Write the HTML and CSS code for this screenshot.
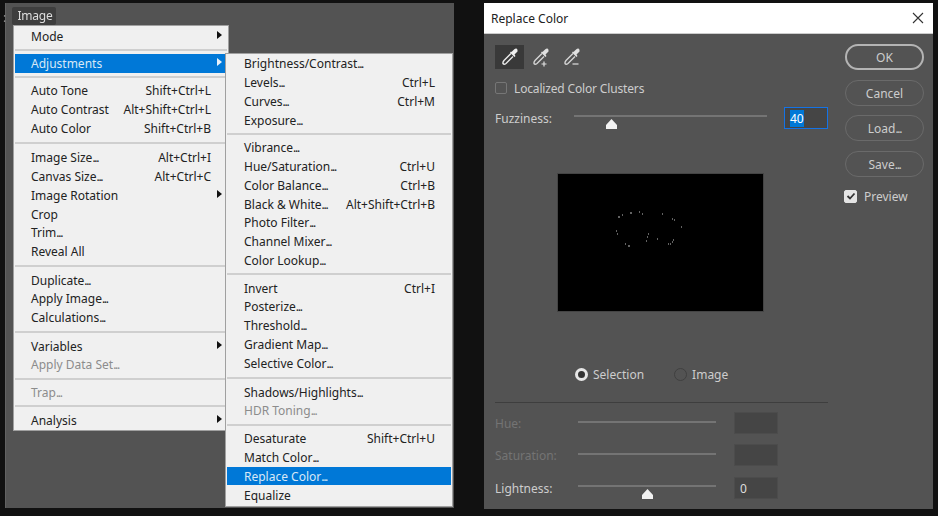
FILE: index.html
```html
<!DOCTYPE html>
<html>
  <head>
    <title>Replace Color</title>
    <meta charset="UTF-8">
    <link rel="stylesheet" href="styles.css">
  </head>
  <body>
    <div class="screen">
      <div class="workspace">
        <span class="grip">:</span>
        <div class="menu-title">Image</div>
        <div class="menu menu-main">
          <div class="item sub">Mode</div>
          <div class="sep"></div>
          <div class="item sub active">Adjustments</div>
          <div class="sep"></div>
          <div class="item">Auto Tone<span>Shift+Ctrl+L</span></div>
          <div class="item">Auto Contrast<span>Alt+Shift+Ctrl+L</span></div>
          <div class="item">Auto Color<span>Shift+Ctrl+B</span></div>
          <div class="sep wide"></div>
          <div class="item"><div>Image Size<i>...</i></div><span>Alt+Ctrl+I</span></div>
          <div class="item"><div>Canvas Size<i>...</i></div><span>Alt+Ctrl+C</span></div>
          <div class="item sub">Image Rotation</div>
          <div class="item">Crop</div>
          <div class="item"><div>Trim<i>...</i></div></div>
          <div class="item">Reveal All</div>
          <div class="sep mid"></div>
          <div class="item"><div>Duplicate<i>...</i></div></div>
          <div class="item"><div>Apply Image<i>...</i></div></div>
          <div class="item"><div>Calculations<i>...</i></div></div>
          <div class="sep mid"></div>
          <div class="item sub">Variables</div>
          <div class="item off"><div>Apply Data Set<i>...</i></div></div>
          <div class="sep"></div>
          <div class="item off"><div>Trap<i>...</i></div></div>
          <div class="sep mid"></div>
          <div class="item sub">Analysis</div>
        </div>
        <div class="menu menu-adjust">
          <div class="item"><div>Brightness/Contrast<i>...</i></div></div>
          <div class="item"><div>Levels<i>...</i></div><span>Ctrl+L</span></div>
          <div class="item"><div>Curves<i>...</i></div><span>Ctrl+M</span></div>
          <div class="item"><div>Exposure<i>...</i></div></div>
          <div class="sep"></div>
          <div class="item"><div>Vibrance<i>...</i></div></div>
          <div class="item"><div>Hue/Saturation<i>...</i></div><span>Ctrl+U</span></div>
          <div class="item"><div>Color Balance<i>...</i></div><span>Ctrl+B</span></div>
          <div class="item"><div>Black &amp; White<i>...</i></div><span>Alt+Shift+Ctrl+B</span></div>
          <div class="item"><div>Photo Filter<i>...</i></div></div>
          <div class="item"><div>Channel Mixer<i>...</i></div></div>
          <div class="item"><div>Color Lookup<i>...</i></div></div>
          <div class="sep"></div>
          <div class="item">Invert<span>Ctrl+I</span></div>
          <div class="item"><div>Posterize<i>...</i></div></div>
          <div class="item"><div>Threshold<i>...</i></div></div>
          <div class="item"><div>Gradient Map<i>...</i></div></div>
          <div class="item"><div>Selective Color<i>...</i></div></div>
          <div class="sep mid"></div>
          <div class="item"><div>Shadows/Highlights<i>...</i></div></div>
          <div class="item off"><div>HDR Toning<i>...</i></div></div>
          <div class="sep"></div>
          <div class="item">Desaturate<span>Shift+Ctrl+U</span></div>
          <div class="item"><div>Match Color<i>...</i></div></div>
          <div class="item active"><div>Replace Color<i>...</i></div></div>
          <div class="item last">Equalize</div>
        </div>
      </div>

      <div class="dialog">
        <div class="titlebar">
          <span>Replace Color</span>
          <svg class="close" width="12" height="12" viewBox="0 0 12 12"><path d="M1 1l10 10M11 1L1 11" stroke="#333" stroke-width="1.1" fill="none"/></svg>
        </div>
        <div class="dialog-body">
          <div class="controls">
            <div class="tools">
              <div class="tool selected">
                <svg width="20" height="20" viewBox="0 0 20 20"><path d="M11 6.500L4 13.500Q2.500 15.500 3 16.500Q4 18 6 16.500L13 9.500" fill="none" stroke="#e8e8e8" stroke-width="1.400"/><path d="M10 5.500L14.500 10L15.500 9L14.500 7.500L17.500 4.500Q18 2.500 16.500 1.500Q15 1 13.500 3L11.500 5L11 4.500Z" fill="#f0f0f0"/></svg>
              </div>
              <div class="tool">
                <svg width="20" height="20" viewBox="0 0 20 20"><path d="M11 6.500L4 13.500Q2.500 15.500 3 16.500Q4 18 6 16.500L13 9.500" fill="none" stroke="#d4d4d4" stroke-width="1.400"/><path d="M10 5.500L14.500 10L15.500 9L14.500 7.500L17.500 4.500Q18 2.500 16.500 1.500Q15 1 13.500 3L11.500 5L11 4.500Z" fill="#e0e0e0"/><path d="M10.500 17h5M13 14.500v5" stroke="#e0e0e0" stroke-width="1.200" fill="none"/></svg>
              </div>
              <div class="tool">
                <svg width="20" height="20" viewBox="0 0 20 20"><path d="M11 6.500L4 13.500Q2.500 15.500 3 16.500Q4 18 6 16.500L13 9.500" fill="none" stroke="#d4d4d4" stroke-width="1.400"/><path d="M10 5.500L14.500 10L15.500 9L14.500 7.500L17.500 4.500Q18 2.500 16.500 1.500Q15 1 13.500 3L11.500 5L11 4.500Z" fill="#e0e0e0"/><path d="M10.500 17h6" stroke="#e0e0e0" stroke-width="1.200" fill="none"/></svg>
              </div>
            </div>
            <label class="check-row"><span class="box"></span>Localized Color Clusters</label>
            <div class="slider-row fuzz">
              <span class="slider-label">Fuzziness:</span>
              <div class="track"><i class="thumb thumb-fuzz"></i></div>
              <div class="num focused"><b>40</b></div>
            </div>
            <div class="preview">
              <svg width="206" height="137" viewBox="0 0 206 137">
                <path d="M60 43h2M64 41h1M72 39h2M81 38h1M84 40h1M104 40h1M114 45h1M116 46h1M123 53h1M58 57h1M59 60h1M67 70h1M70 72h2M115 66h1M114 68h1M112 70h1M110 70h1M90 60h1M89 63h1M88 67h1M99 65h1"
                  stroke="#c4c4c4" stroke-width="1" fill="none"/>
              </svg>
            </div>
            <div class="radios">
              <label class="radio-row"><span class="radio on"></span>Selection</label>
              <label class="radio-row"><span class="radio"></span>Image</label>
            </div>
            <div class="rule"></div>
            <div class="slider-row off">
              <span class="slider-label">Hue:</span>
              <div class="track"></div>
              <div class="num"></div>
            </div>
            <div class="slider-row off">
              <span class="slider-label">Saturation:</span>
              <div class="track"></div>
              <div class="num"></div>
            </div>
            <div class="slider-row light">
              <span class="slider-label">Lightness:</span>
              <div class="track"><i class="thumb thumb-light"></i></div>
              <div class="num">0</div>
            </div>
          </div>
          <div class="buttons">
            <button class="default">OK</button>
            <button>Cancel</button>
            <button>Load<i>...</i></button>
            <button>Save<i>...</i></button>
            <label class="preview-check">
              <span class="box checked"><svg width="10" height="10" viewBox="0 0 10 10"><path d="M1.500 5l2.500 2.500 4.500-5" fill="none" stroke="#333" stroke-width="1.800"/></svg></span>Preview
            </label>
          </div>
        </div>
      </div>
    </div>
  </body>
</html>
```

FILE: styles.css
```css
* {
  box-sizing: border-box;
}
html, body {
  margin: 0;
  padding: 0;
  background-color: #111;
}
body {
  font-family: "Noto Sans", sans-serif;
  font-size: 12px;
  overflow: hidden;
}
i {
  font-style: normal;
}
.screen {
  display: flex;
  align-items: flex-start;
  width: 938px;
  height: 516px;
  padding: 3px 5px 5px 5px;
  gap: 30px;
  filter: blur(0.3px);
}

/* left side, photoshop menus */
.workspace {
  position: relative;
  width: 449px;
  height: 505px;
  background-color: #535353;
  border-left: 1px solid #626262;
}
.grip {
  position: absolute;
  left: -3px;
  top: 6px;
  color: #8a8a8a;
}
.menu-title {
  position: absolute;
  left: 6px;
  top: 4px;
  width: 44px;
  height: 18px;
  padding-left: 2px;
  background-color: #3e3e3e;
  border-radius: 2px;
  color: #ddd;
  text-align: center;
  line-height: 18px;
  letter-spacing: -0.2px;
}
.menu {
  position: absolute;
  background-color: #f0f0f0;
  border: 1px solid #a0a0a0;
  color: #222;
}
.menu-main {
  left: 7px;
  top: 22px;
  width: 216px;
  height: 406px;
  padding: 1px;
  z-index: 1;
}
.menu-adjust {
  left: 219px;
  top: 50px;
  width: 228px;
  height: 454px;
  padding: 0 1px;
  z-index: 2;
}
.item {
  position: relative;
  display: flex;
  justify-content: space-between;
  align-items: center;
  height: 18.800px;
  padding: 0 16px;
  white-space: nowrap;
}
.menu-adjust .item {
  height: 18.900px;
  padding: 0 16px 0 17px;
}
.menu-adjust .item.last {
  margin-top: 1px;
}
.item i,
.buttons i {
  letter-spacing: -1.300px;
}
.item.active {
  background-color: #0078d7;
  color: #d8e8f6;
}
.item.off {
  color: #8c8c8c;
}
.item.sub::after {
  content: "";
  position: absolute;
  right: 5px;
  top: 4px;
  border-left: 5px solid #111;
  border-top: 4.500px solid transparent;
  border-bottom: 4.500px solid transparent;
}
.item.active.sub::after {
  border-left-color: #e8f2fb;
}
.sep {
  height: 8.400px;
  display: flex;
  align-items: center;
}
.sep::before {
  content: "";
  flex: 1;
  height: 2px;
  background-color: #cfcfcf;
}
.sep.mid {
  height: 9.600px;
}
.sep.wide {
  height: 10.600px;
}

/* right side, the dialog */
.dialog {
  display: flex;
  flex-direction: column;
  width: 449px;
  height: 506px;
  background-color: #535353;
  color: #cdcdcd;
}
.titlebar {
  display: flex;
  justify-content: space-between;
  align-items: center;
  height: 31px;
  flex-shrink: 0;
  padding: 0 9px 0 7px;
  background-color: #fff;
  border-bottom: 1px solid #ccc;
  color: #222;
}
.dialog-body {
  display: flex;
  flex: 1;
  padding: 10px 9px 0 11px;
}
.controls {
  display: flex;
  flex-direction: column;
  width: 333px;
}
.tools {
  display: flex;
  gap: 2px;
  margin-top: 1px;
}
.tool {
  display: flex;
  align-items: center;
  justify-content: center;
  width: 29px;
  height: 24px;
}
.tool.selected {
  background-color: #393939;
}
.check-row {
  display: flex;
  align-items: center;
  gap: 7px;
  height: 18px;
  margin-top: 10px;
  letter-spacing: -0.16px;
}
.box {
  display: inline-block;
  width: 12px;
  height: 12px;
  border: 1px solid #767676;
  border-radius: 2px;
}
.box.checked {
  display: flex;
  align-items: center;
  justify-content: center;
  width: 13px;
  height: 13px;
  background-color: #e4e4e4;
  border-color: #e4e4e4;
}
.slider-row {
  display: flex;
  align-items: center;
  height: 22px;
}
.slider-row.fuzz {
  margin-top: 10px;
}
.slider-row.off {
  color: #747474;
}
.slider-label {
  width: 79px;
}
.track {
  position: relative;
  width: 138px;
  height: 2px;
  margin: 0 0 4px 4px;
  background-color: #747474;
}
.slider-row.off .track {
  margin-bottom: 2px;
}
.slider-row.fuzz .track {
  width: 193px;
  margin-left: 0;
}
.thumb {
  position: absolute;
  top: 4px;
  width: 11px;
  height: 10px;
  background-color: #f2f2f2;
  clip-path: polygon(50% 0, 100% 60%, 100% 100%, 0 100%, 0 60%);
}
.thumb-fuzz {
  left: 32px;
}
.thumb-light {
  left: 64px;
}
.num {
  width: 44px;
  height: 22px;
  margin-left: 18px;
  padding: 2px 5px;
  background-color: #454545;
  border: 1px solid #4c4c4c;
  color: #ddd;
}
.num.focused {
  margin-left: 17px;
  border-color: #1473e6;
}
.num b {
  font-weight: normal;
  background-color: #0078d7;
  color: #fff;
}
.preview {
  width: 207px;
  height: 139px;
  margin: 44px 0 0 62px;
  background-color: #000;
  border: 1px solid #444;
}
.preview svg {
  display: block;
}
.radios {
  display: flex;
  gap: 30px;
  margin: 54px 0 0 80px;
}
.radio-row {
  display: flex;
  align-items: center;
  gap: 5px;
}
.radio {
  width: 13px;
  height: 13px;
  border: 1px solid #404040;
  border-radius: 50%;
}
.radio.on {
  background-color: #333;
  border: 3.500px solid #e6e6e6;
}
.rule {
  height: 1px;
  margin: 19px 0 9px 0;
  background-color: #3e3e3e;
}
.slider-row + .slider-row {
  margin-top: 10px;
}
.slider-row.off + .slider-row.light {
  margin-top: 11px;
}
.buttons {
  display: flex;
  flex-direction: column;
  align-items: flex-start;
  width: 79px;
  margin-left: 17px;
}
.buttons button {
  width: 79px;
  height: 26px;
  margin-bottom: 9.700px;
  background: none;
  border: 1px solid #6a6a6a;
  border-radius: 13px;
  color: #cdcdcd;
  font-family: inherit;
  font-size: 12px;
  padding: 1px 0 0 0;
}
.buttons button.default {
  border: 2px solid #b4b4b4;
}
.preview-check {
  display: flex;
  align-items: center;
  gap: 7px;
  margin: 1px 0 0 -1px;
}
```
